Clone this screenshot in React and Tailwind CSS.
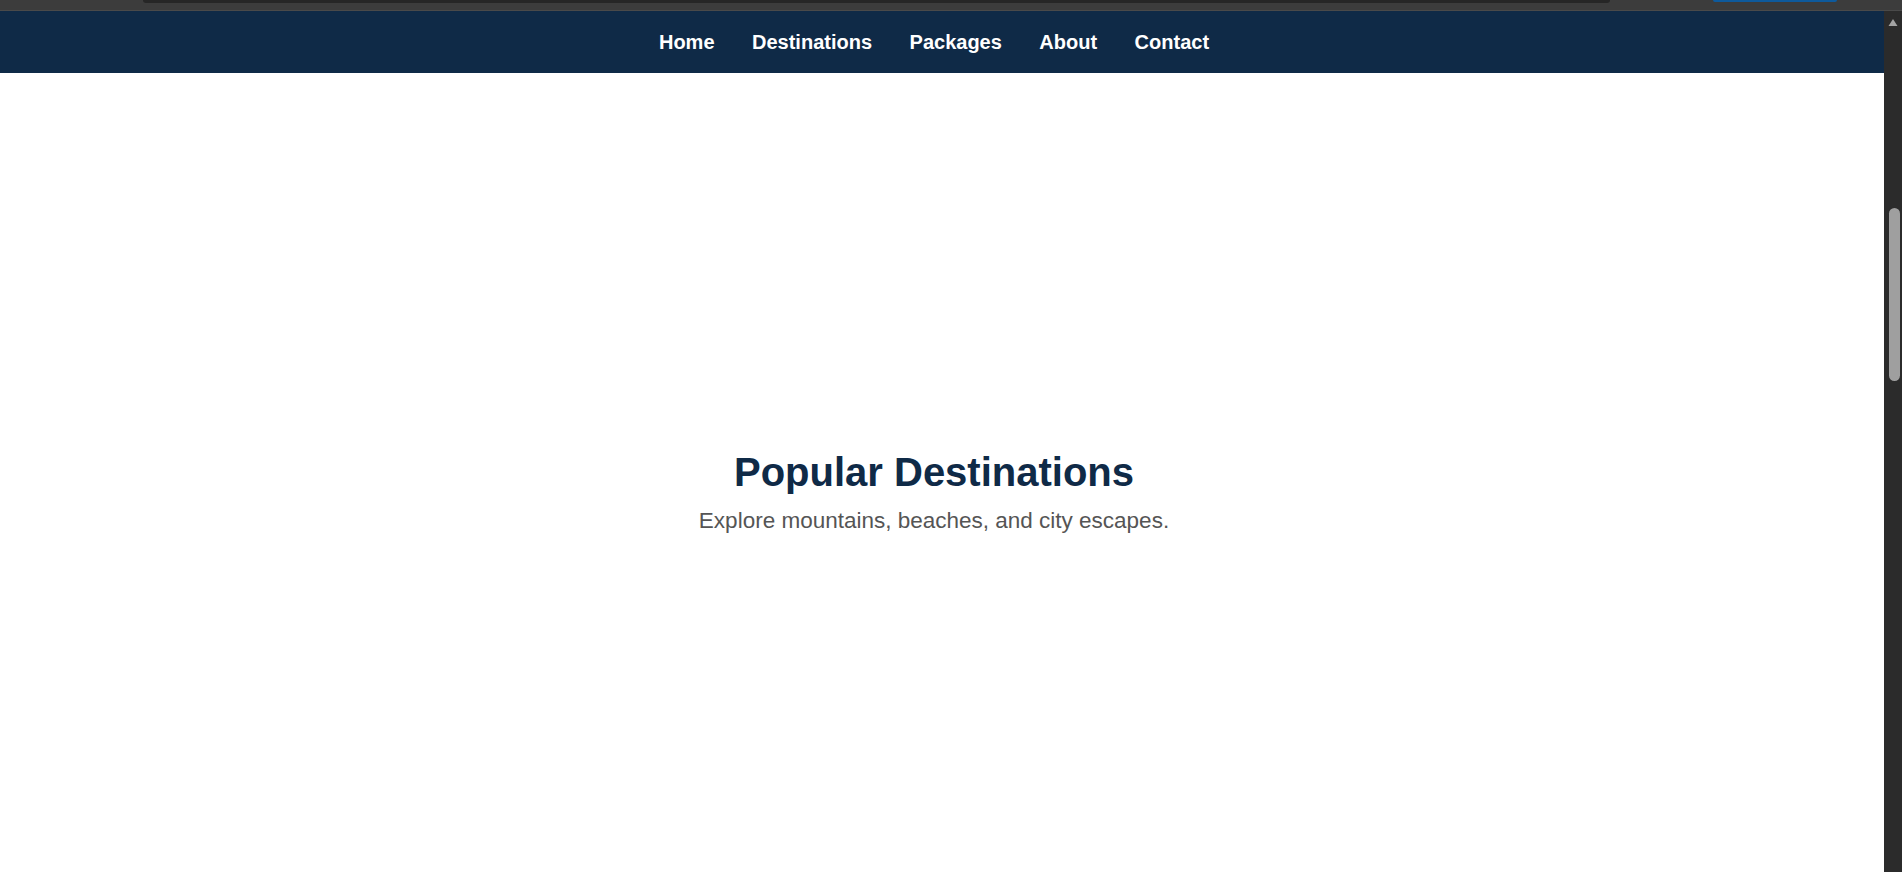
import React from 'react';

const links = ['Home', 'Destinations', 'Packages', 'About', 'Contact'];

const App = () => {
  return (
    <div
      className="flex flex-col h-screen w-full overflow-hidden bg-white"
      style={{ fontFamily: '"Liberation Sans", Arial, sans-serif' }}
    >
      {/* Browser chrome strip */}
      <div className="relative h-[11px] shrink-0 bg-[#3c3c3c] border-b border-[#4a4a4a]">
        <div className="absolute left-[143px] top-0 h-[3px] w-[1467px] rounded-b-[6px] bg-[#262626]" />
        <div className="absolute left-[1713px] top-0 h-[2px] w-[124px] rounded-b-[6px] bg-[#0e5a9c]" />
      </div>

      <div className="flex flex-1 min-h-0">
        {/* Page */}
        <div className="flex flex-col flex-1 min-w-0">
          {/* Navbar */}
          <nav className="h-[62px] shrink-0 bg-[#0f2a47] flex items-center justify-center pr-[16px] pt-[2px]">
            <ul className="flex gap-[37.5px]">
              {links.map((link) => (
                <li key={link}>
                  <a className="text-white font-bold text-[20px] leading-[normal] cursor-pointer">
                    {link}
                  </a>
                </li>
              ))}
            </ul>
          </nav>

          {/* Hero */}
          <section className="flex-1 flex flex-col items-center pt-[377px] pr-[16px] text-center">
            <h2 className="text-[40px] font-bold leading-[normal] text-[#0f2a47]">
              Popular Destinations
            </h2>
            <p className="mt-[13px] text-[22.5px] leading-[normal] text-[#555555]">
              Explore mountains, beaches, and city escapes.
            </p>
          </section>
        </div>

        {/* Scrollbar */}
        <div className="w-[18px] shrink-0 bg-[#2b2b2b] flex flex-col items-center pt-[7px]">
          <svg width="10" height="9" viewBox="0 0 10 9">
            <polygon points="5,1 9.5,8 0.5,8" fill="#a3a3a3" />
          </svg>
          <div className="mt-[181px] h-[173px] w-[11px] ml-[2px] rounded-full bg-[#9f9f9f]" />
        </div>
      </div>
    </div>
  );
};

export default App;
